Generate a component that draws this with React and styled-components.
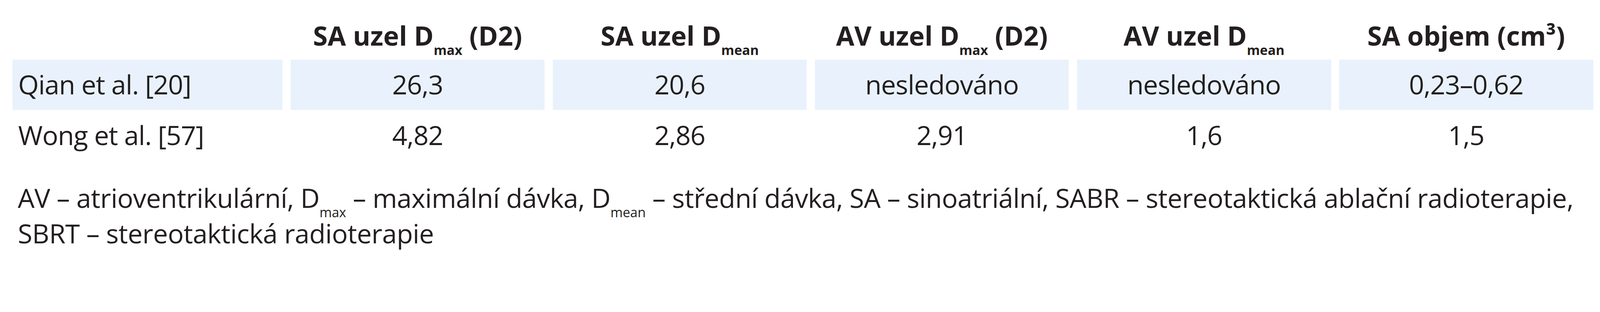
import React from "react";
import styled, { createGlobalStyle } from "styled-components";

/* All sizes are given in the units of the 4939px-wide reference and scaled to the viewport width. */
const u = (n) => `calc(${n} * 100vw / 4939)`;

const GlobalStyle = createGlobalStyle`
  html, body { margin: 0; padding: 0; background: #ffffff; overflow: hidden; }
  body {
    font-family: "Open Sans", Lato, sans-serif;
    color: #231f20;
  }
`;

const Page = styled.div`
  box-sizing: border-box;
  width: 100vw;
  height: ${u(800)};
  padding: 0 ${u(21)} 0 ${u(38)};
  overflow: hidden;
  font-size: ${u(82)};
`;

const Table = styled.div`
  display: grid;
  grid-template-columns: ${u(834)} repeat(5, minmax(0, 1fr));
  column-gap: ${u(25)};
`;

const HeadCell = styled.div`
  box-sizing: border-box;
  height: ${u(185)};
  padding-top: ${u(59)};
  line-height: ${u(102)};
  font-weight: 700;
  text-align: center;
  white-space: nowrap;
`;

const Cell = styled.div`
  box-sizing: border-box;
  height: ${u(155)};
  display: flex;
  align-items: center;
  justify-content: ${(p) => (p.$first ? "flex-start" : "center")};
  padding-left: ${(p) => (p.$first ? u(18) : "0")};
  padding-bottom: ${(p) => (p.$shade ? u(4) : "0")};
  background: ${(p) => (p.$shade ? "#e9f2fc" : "transparent")};
  line-height: ${u(102)};
  letter-spacing: ${u(-1.3)};
  white-space: nowrap;
`;

const Sub = styled.span`
  font-size: ${u(41)};
  line-height: 0;
  letter-spacing: 0;
  vertical-align: ${u(-29)};
`;

const Footer = styled.div`
  margin-top: ${u(61)};
  padding-left: ${u(17)};
  line-height: ${u(110)};
  letter-spacing: ${u(-0.7)};
  white-space: nowrap;
`;

const headers = [
  null,
  <>SA uzel D<Sub>max</Sub> (D2)</>,
  <>SA uzel D<Sub>mean</Sub></>,
  <>AV uzel D<Sub>max</Sub> (D2)</>,
  <>AV uzel D<Sub>mean</Sub></>,
  <>SA objem (cm³)</>,
];

const rows = [
  { shade: true, cells: ["Qian et al. [20]", "26,3", "20,6", "nesledováno", "nesledováno", "0,23–0,62"] },
  { shade: false, cells: ["Wong et al. [57]", "4,82", "2,86", "2,91", "1,6", "1,5"] },
];

export default function App() {
  return (
    <>
      <GlobalStyle />
      <Page>
        <Table>
          {headers.map((h, i) => (
            <HeadCell key={"h" + i}>{h}</HeadCell>
          ))}
          {rows.map((r, ri) =>
            r.cells.map((c, ci) => (
              <Cell key={ri + "-" + ci} $first={ci === 0} $shade={r.shade}>
                {c}
              </Cell>
            ))
          )}
        </Table>
        <Footer>
          AV – atrioventrikulární, D<Sub>max</Sub> – maximální dávka, D<Sub>mean</Sub> – střední dávka, SA – sinoatriální, SABR – stereotaktická ablační radioterapie,
          <br />
          SBRT – stereotaktická radioterapie
        </Footer>
      </Page>
    </>
  );
}
